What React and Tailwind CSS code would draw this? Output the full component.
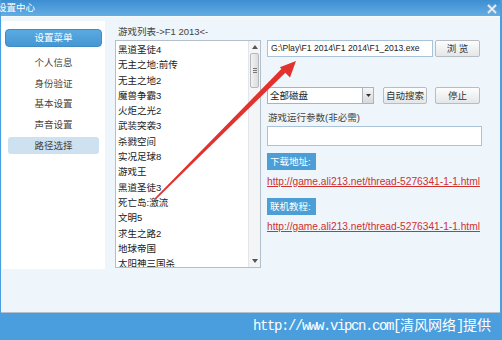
import React from "react"

const games = [
	"黑道圣徒4",
	"无主之地:前传",
	"无主之地2",
	"魔兽争霸3",
	"火炬之光2",
	"武装突袭3",
	"杀戮空间",
	"实况足球8",
	"游戏王",
	"黑道圣徒3",
	"死亡岛:激流",
	"文明5",
	"求生之路2",
	"地球帝国",
	"太阳神三国杀",
]

const menu = ["个人信息", "身份验证", "基本设置", "声音设置", "路径选择"]

const link = "http://game.ali213.net/thread-5276341-1-1.html"

function Btn({ children, className = "" }) {
	return (
		<button
			className={
				"h-[17px] rounded-[2px] border border-[#b7bcc2] bg-gradient-to-b from-[#fdfdfd] to-[#e4e6e8] text-[9.5px] leading-[15px] text-[#333] " +
				className
			}
		>
			{children}
		</button>
	)
}

function Badge({ children }) {
	return (
		<div className="h-[17px] w-[49px] bg-[#4c9fd6] pl-[3px] text-[9.5px] leading-[17px] text-white">
			{children}
		</div>
	)
}

function Arrow() {
	return (
		<svg
			className="pointer-events-none absolute left-0 top-0"
			width="502"
			height="340"
			viewBox="0 0 502 340"
		>
			<polygon points="154.5,198.5 155.8,199.6 285.6,72.4 281.8,68.6" fill="#e1322e" />
			<polygon points="296,61 290,77.5 279.8,67.2" fill="#e1322e" />
		</svg>
	)
}

function App() {
	return (
		<div className="relative h-[340px] w-[502px] overflow-hidden bg-[#4a9edd] font-['Liberation_Sans','Noto_Sans_CJK_SC',sans-serif]">
			<div className="ml-[1px] flex h-[313px] w-[499px] flex-col">
				{/* title bar */}
				<div className="flex h-[16px] items-center justify-between bg-gradient-to-b from-[#3d8ed2] to-[#62ade3]">
					<span className="-ml-[4px] text-[9.5px] leading-[16px] text-white">设置中心</span>
					<svg width="12" height="10" viewBox="0 0 12 10" className="mr-[2px] mt-[1px]">
						<path d="M2 1 L10 9 M10 1 L2 9" stroke="#98b9d3" strokeWidth="3" />
						<path d="M2 1 L10 9 M10 1 L2 9" stroke="#eef5fb" strokeWidth="1.4" />
					</svg>
				</div>

				{/* body */}
				<div className="flex flex-1 border-t border-b border-t-[#f6fafd] border-b-[#b4c0cc] bg-[#eef5fb]">
					{/* left menu */}
					<div className="ml-[1px] mt-[4px] flex h-[248px] w-[103px] flex-col bg-white px-[3px] pt-[8px]">
						<div className="h-[18px] rounded-[4px] border border-[#3f8bc6] bg-gradient-to-b from-[#5aaae2] to-[#4597d3] text-center text-[9.5px] leading-[16px] text-white">
							设置菜单
						</div>
						<div className="mt-[5px] flex flex-col">
							{menu.map((m, i) => (
								<div key={m} className="flex h-[20.7px] items-center">
									<div
										className={
											"mx-[3px] h-[17px] flex-1 rounded-[3px] text-center text-[9.5px] leading-[17px] text-[#444] " +
											(i === 4 ? "bg-[#cde1f1]" : "")
										}
									>
										{m}
									</div>
								</div>
							))}
						</div>
					</div>

					{/* game list */}
					<div className="ml-[10px] flex flex-col pt-[7px]">
						<div className="h-[16px] pl-[3px] text-[9.5px] leading-[16px] text-[#444]">
							游戏列表-&gt;F1 2013&lt;-
						</div>
						<div className="flex h-[228px] w-[146px] overflow-hidden border border-[#b3c0cc] bg-white">
							<div className="flex-1 pl-[2px] pt-[1px]">
								{games.map((g) => (
									<div key={g} className="h-[15.3px] text-[9.5px] leading-[15.3px] text-[#222]">
										{g}
									</div>
								))}
							</div>
							<div className="flex w-[12px] flex-col items-center border-l border-[#e2e6ea] bg-[#f4f5f6]">
								<svg width="6" height="4" viewBox="0 0 6 4" className="mt-[4px]">
									<path d="M0 4 L3 0 L6 4 Z" fill="#555" />
								</svg>
								<div className="mt-[4px] flex h-[35px] w-[9px] flex-col items-center justify-center gap-[1px] rounded-[2px] border border-[#b5b9bd] bg-gradient-to-r from-[#f2f2f2] to-[#dcdcdc]">
									<div className="h-px w-[4px] bg-[#777]" />
									<div className="h-px w-[4px] bg-[#777]" />
									<div className="h-px w-[4px] bg-[#777]" />
								</div>
								<div className="flex-1" />
								<svg width="6" height="4" viewBox="0 0 6 4" className="mb-[4px]">
									<path d="M0 0 L3 4 L6 0 Z" fill="#555" />
								</svg>
							</div>
						</div>
					</div>

					{/* right side */}
					<div className="ml-[6px] flex w-[215px] flex-col pt-[23px]">
						<div className="flex h-[17px] gap-[2px]">
							<div className="h-[17px] w-[166px] border border-[#a9c2d8] bg-white pl-[3px] text-[8.6px] leading-[15px] text-[#222]">
								G:\Play\F1 2014\F1 2014\F1_2013.exe
							</div>
							<Btn className="w-[45px]">浏 览</Btn>
						</div>

						<div className="mt-[30px] flex h-[17px]">
							<div className="flex h-[17px] w-[107px] border border-[#a9b3bd] bg-white">
								<div className="flex-1 pl-[2px] text-[9.5px] leading-[15px] text-[#222]">全部磁盘</div>
								<div className="flex w-[11px] items-center justify-center border-l border-[#a9b3bd] bg-gradient-to-b from-[#f6f6f6] to-[#d8d8d8]">
									<svg width="5" height="3" viewBox="0 0 5 3">
										<path d="M0 0 L2.5 3 L5 0 Z" fill="#333" />
									</svg>
								</div>
							</div>
							<Btn className="ml-[9px] w-[44px]">自动搜索</Btn>
							<Btn className="ml-[8px] w-[45px]">停止</Btn>
						</div>

						<div className="mt-[7px] h-[14px] pl-[1px] text-[9.5px] leading-[14px] text-[#444]">
							游戏运行参数(非必需)
						</div>
						<div className="mt-[1px] h-[20px] w-[215px] border border-[#a9c2d8] bg-white" />

						<div className="mt-[7px]">
							<Badge>下载地址:</Badge>
						</div>
						<div className="mt-[6px] h-[12px] text-[10.2px] leading-[12px] text-[#d0302f] underline">
							{link}
						</div>

						<div className="mt-[10px]">
							<Badge>联机教程:</Badge>
						</div>
						<div className="mt-[6px] h-[12px] text-[10.2px] leading-[12px] text-[#d0302f] underline">
							{link}
						</div>
					</div>
				</div>
			</div>

			{/* watermark */}
			<div className="flex h-[27px] items-center justify-end pr-[11px] text-[14px] text-white font-['Liberation_Mono','Noto_Sans_CJK_SC',monospace]">
				<span className="tracking-[-1.4px]">http://www.vipcn.com[</span>
				<span>清风网络</span>
				<span className="tracking-[-1.4px]">]</span>
				<span>提供</span>
			</div>

			<Arrow />
		</div>
	)
}

export default App
